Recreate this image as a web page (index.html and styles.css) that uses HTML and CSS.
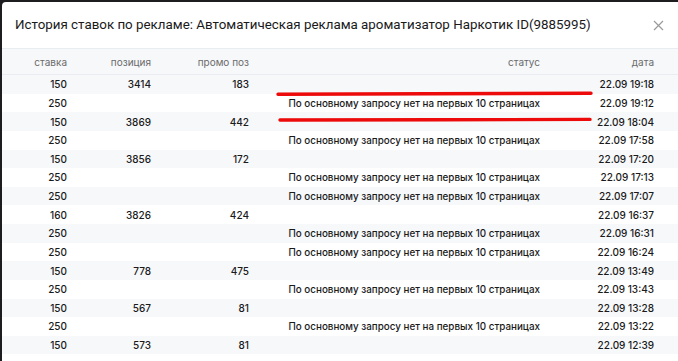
FILE: index.html
```html
<!DOCTYPE html>
<html lang="ru">
<head>
<meta charset="utf-8">
<title>История ставок</title>
<link rel="stylesheet" href="styles.css">
</head>
<body>
<div class="modal">
  <div class="modal-head">
    <div class="modal-title">История ставок по рекламе: Автоматическая реклама ароматизатор Наркотик ID(9885995)</div>
    <svg class="close" width="11" height="11" viewBox="0 0 11 11"><path d="M1 1L10 10M10 1L1 10" stroke="#9a9a9a" stroke-width="1.2" fill="none"/></svg>
  </div>
  <div class="table">
    <div class="row head"><span>ставка</span><span>позиция</span><span>промо поз</span><span>статус</span><span>дата</span></div>
    <div class="row odd"><span>150</span><span>3414</span><span>183</span><span></span><span>22.09 19:18</span></div>
    <div class="row"><span>250</span><span></span><span></span><span class="status">По основному запросу нет на первых 10 страницах</span><span>22.09 19:12</span></div>
    <div class="row odd"><span>150</span><span>3869</span><span>442</span><span></span><span>22.09 18:04</span></div>
    <div class="row"><span>250</span><span></span><span></span><span class="status">По основному запросу нет на первых 10 страницах</span><span>22.09 17:58</span></div>
    <div class="row odd"><span>150</span><span>3856</span><span>172</span><span></span><span>22.09 17:20</span></div>
    <div class="row"><span>250</span><span></span><span></span><span class="status">По основному запросу нет на первых 10 страницах</span><span>22.09 17:13</span></div>
    <div class="row odd"><span>250</span><span></span><span></span><span class="status">По основному запросу нет на первых 10 страницах</span><span>22.09 17:07</span></div>
    <div class="row"><span>160</span><span>3826</span><span>424</span><span></span><span>22.09 16:37</span></div>
    <div class="row odd"><span>250</span><span></span><span></span><span class="status">По основному запросу нет на первых 10 страницах</span><span>22.09 16:31</span></div>
    <div class="row"><span>250</span><span></span><span></span><span class="status">По основному запросу нет на первых 10 страницах</span><span>22.09 16:24</span></div>
    <div class="row odd"><span>150</span><span>778</span><span>475</span><span></span><span>22.09 13:49</span></div>
    <div class="row"><span>250</span><span></span><span></span><span class="status">По основному запросу нет на первых 10 страницах</span><span>22.09 13:43</span></div>
    <div class="row odd"><span>150</span><span>567</span><span>81</span><span></span><span>22.09 13:28</span></div>
    <div class="row"><span>250</span><span></span><span></span><span class="status">По основному запросу нет на первых 10 страницах</span><span>22.09 13:22</span></div>
    <div class="row odd"><span>150</span><span>573</span><span>81</span><span></span><span>22.09 12:39</span></div>
    <div class="row"><span></span><span></span><span></span><span></span><span></span></div>
  </div>
</div>
<svg class="marks" width="678" height="361" viewBox="0 0 678 361">
  <path d="M278 94.2 L430 93.8 L591 93.2" stroke="#ec0a0a" stroke-width="3.4" stroke-linecap="round" fill="none"/>
  <path d="M280 120 L440 119.8 L590 119.4" stroke="#ec0a0a" stroke-width="3.4" stroke-linecap="round" fill="none"/>
</svg>
</body>
</html>
```

FILE: styles.css
```css
html, body {
  margin: 0;
  padding: 0;
}
body {
  background: #1d1d1f;
  width: 678px;
  height: 361px;
  overflow: hidden;
  font-family: Inter, "Noto Sans", sans-serif;
  color: #1f1f1f;
}
.modal {
  margin: 2px 0 0 2px;
  background: #ffffff;
  border-top-left-radius: 4px;
  height: 359px;
  overflow: hidden;
}
.modal-head {
  height: 46px;
  display: flex;
  align-items: center;
  padding: 0 14px 0 13px;
  justify-content: space-between;
}
.modal-title {
  font-family: Roboto, "Liberation Sans", sans-serif;
  font-size: 13.35px;
  color: #1a1a1a;
  white-space: nowrap;
  padding-bottom: 1px;
}
.close {
  display: block;
  flex-shrink: 0;
}
.row {
  display: grid;
  grid-template-columns: 65px 84px 98px 291px 114px;
  height: 18.64px;
  align-items: center;
  font-size: 10px;
  font-weight: 500;
  color: #1a1a1a;
}
.row span {
  text-align: right;
  white-space: nowrap;
}
.row .status {
  font-size: 9.85px;
}
.row.head {
  height: 25px;
  background: #f6f8fa;
  border-top: 1px solid #e9ecf0;
  border-bottom: 1px solid #e9ecf0;
  color: #6b6b6b;
  font-weight: 400;
}
.row.odd {
  background: #f6f8fa;
}
.marks {
  position: absolute;
  top: 0;
  left: 0;
  pointer-events: none;
}
```
